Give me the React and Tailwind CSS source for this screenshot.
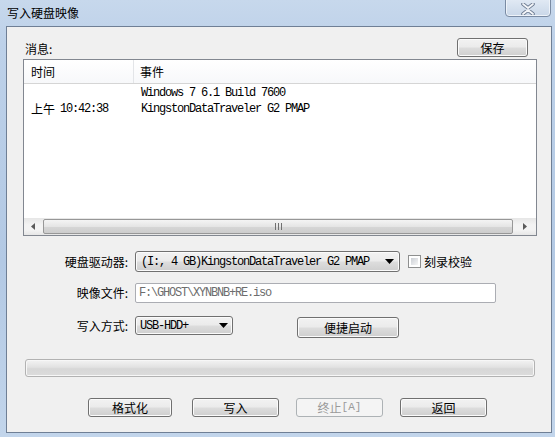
function Btn({ children, className = "" }) {
  return (
    <div
      className={`flex items-center justify-center rounded-[3px] border border-[#707070] bg-[linear-gradient(#f2f2f2_0%,#ebebeb_48%,#dddddd_52%,#cfcfcf_100%)] shadow-[inset_0_0_0_1px_#fbfbfb] text-[12px] leading-none text-black ${className}`}
    >
      {children}
    </div>
  );
}

function DisabledBtn({ children, className = "" }) {
  return (
    <div
      className={`flex items-center justify-center rounded-[3px] border border-[#adb2b5] bg-[#f4f4f4] text-[12px] leading-none text-[#9a9a9a] ${className}`}
    >
      {children}
    </div>
  );
}

function Arrow() {
  return (
    <svg width="9" height="5" viewBox="0 0 9 5" className="shrink-0">
      <path d="M0 0 H9 L4.5 5 Z" fill="#000" />
    </svg>
  );
}

export default function App() {
  const mono = "font-['Liberation_Mono','Noto_Sans_CJK_SC',monospace] text-[12px] tracking-[-1.2px]";
  return (
    <div className="relative h-[437px] w-[555px] overflow-hidden bg-[linear-gradient(180deg,#c7d8ec_0%,#bdd1e9_10%,#b3c9e4_60%,#c2d5eb_100%)] font-['Noto_Sans_CJK_SC',sans-serif]">
      {/* title bar */}
      <div className="flex h-[26px] items-start justify-between">
        <div className="pl-[7px] pt-[4px] text-[12px] leading-[18px] text-black">写入硬盘映像</div>
        <div className="mr-[4px] mt-[-3px] flex h-[20px] w-[46px] items-center justify-center rounded-b-[4px] border border-[#7a8ba3] bg-[linear-gradient(#e3ebf5,#c9d7e8)] shadow-[inset_0_0_0_1px_#eef3f9]">
          <svg width="14" height="12" viewBox="0 0 14 12" className="mt-[3px]">
            <path d="M2 1 L7 5 L12 1 M2 11 L7 7 L12 11" stroke="#6b7a90" strokeWidth="3.6" fill="none" strokeLinecap="round" />
            <path d="M2 1 L7 5 L12 1 M2 11 L7 7 L12 11" stroke="#f4f6f9" strokeWidth="1.8" fill="none" strokeLinecap="round" />
          </svg>
        </div>
      </div>

      {/* client area */}
      <div className="ml-[6px] h-[407px] w-[546px] border border-[#6f7f95] bg-[#f0f0f0]">
        {/* messages header */}
        <div className="mt-[10px] flex h-[20px] items-end">
          <div className="ml-[18px] text-[12px] leading-[16px] text-black">消息:</div>
          <Btn className="ml-auto mr-[23px] h-[19px] w-[71px]">保存</Btn>
        </div>

        {/* list box */}
        <div className="ml-[16px] mt-[2px] flex h-[177px] w-[514px] flex-col border border-[#828790] bg-white">
          <div className="flex h-[24px] shrink-0 border-b border-[#d5d5d5] bg-[linear-gradient(#ffffff,#f7f8fa)]">
            <div className="flex w-[110px] items-center border-r border-[#e3e5e8] pl-[7px] text-[12px] text-black">时间</div>
            <div className="flex items-center pl-[6px] text-[12px] text-black">事件</div>
          </div>
          <div className="flex flex-1 pt-[1px]">
            <div className="mt-[16px] flex h-[16px] w-[110px] items-center pl-[7px]">
              <span className="text-[12px] leading-[16px] text-black">上午</span>
              <span className={`${mono} ml-[5px] leading-[16px] text-black`}>10:42:38</span>
            </div>
            <div className={`${mono} pl-[7px] leading-[16px] text-black`}>
              <div>Windows 7 6.1 Build 7600</div>
              <div>KingstonDataTraveler G2 PMAP</div>
            </div>
          </div>
          {/* horizontal scrollbar */}
          <div className="flex h-[17px] shrink-0 items-center bg-[linear-gradient(#e6e6e6,#f3f3f3_40%,#f3f3f3_70%,#e6e6e6)]">
            <div className="flex w-[17px] items-center justify-center">
              <svg width="4" height="7" viewBox="0 0 4 7"><path d="M4 0 V7 L0 3.5 Z" fill="#5a5a5a" /></svg>
            </div>
            <div className="ml-[2px] flex h-[15px] w-[470px] items-center justify-center rounded-[2px] border border-[#979797] bg-[linear-gradient(#f4f4f4,#e5e5e5_50%,#d6d6d6_51%,#cdcdcd)]">
              <svg width="7" height="7" viewBox="0 0 7 7">
                <path d="M0.5 0 V7 M3.5 0 V7 M6.5 0 V7" stroke="#707070" strokeWidth="1" />
              </svg>
            </div>
            <div className="flex flex-1 items-center justify-center">
              <svg width="4" height="7" viewBox="0 0 4 7"><path d="M0 0 V7 L4 3.5 Z" fill="#5a5a5a" /></svg>
            </div>
          </div>
        </div>

        {/* drive row */}
        <div className="mt-[15px] flex h-[21px] items-center">
          <div className="w-[121px] text-right text-[12px] text-black">硬盘驱动器:</div>
          <Btn className="ml-[7px] h-[21px] w-[265px] !justify-between px-[5px]">
            <span className={`${mono}`}>(I:, 4 GB)KingstonDataTraveler G2 PMAP</span>
            <Arrow />
          </Btn>
          <div className="ml-[8px] h-[13px] w-[13px] border border-[#8e8f8f] bg-white p-[2px]">
            <div className="h-full w-full bg-[linear-gradient(135deg,#cbcfd5,#f6f6f6)]" />
          </div>
          <div className="ml-[3px] text-[12px] text-black">刻录校验</div>
        </div>

        {/* image row */}
        <div className="mt-[11px] flex h-[20px] items-center">
          <div className="w-[121px] text-right text-[12px] text-black">映像文件:</div>
          <div className={`ml-[7px] flex h-[20px] w-[361px] items-center rounded-[2px] border border-[#abadb3] bg-white pl-[3px] ${mono} text-[#6d6d6d]`}>
            F:\GHOST\XYNBNB+RE.iso
          </div>
        </div>

        {/* mode row */}
        <div className="mt-[13px] flex h-[21px] items-start">
          <div className="flex h-[19px] w-[121px] items-center justify-end text-[12px] text-black">写入方式:</div>
          <Btn className="ml-[7px] h-[19px] w-[98px] !justify-between px-[4px]">
            <span className={`${mono}`}>USB-HDD+</span>
            <Arrow />
          </Btn>
          <Btn className="ml-[64px] mt-[1px] h-[21px] w-[102px]">便捷启动</Btn>
        </div>

        {/* progress */}
        <div className="ml-[18px] mt-[22px] h-[18px] w-[510px] rounded-[3px] border border-[#b2b2b2] bg-[linear-gradient(#f3f3f3,#e2e2e2_45%,#d7d7d7_55%,#dcdcdc)] shadow-[inset_0_0_0_1px_#f7f7f7]" />

        {/* bottom buttons */}
        <div className="mt-[21px] flex h-[19px]">
          <Btn className="ml-[81px] h-[19px] w-[84px]">格式化</Btn>
          <Btn className="ml-[20px] h-[19px] w-[87px]">写入</Btn>
          <DisabledBtn className="ml-[17px] h-[19px] w-[87px]">
            终止<span className="font-['Liberation_Mono',monospace] text-[11px]">[A]</span>
          </DisabledBtn>
          <Btn className="ml-[17px] h-[19px] w-[87px]">返回</Btn>
        </div>
      </div>
    </div>
  );
}
